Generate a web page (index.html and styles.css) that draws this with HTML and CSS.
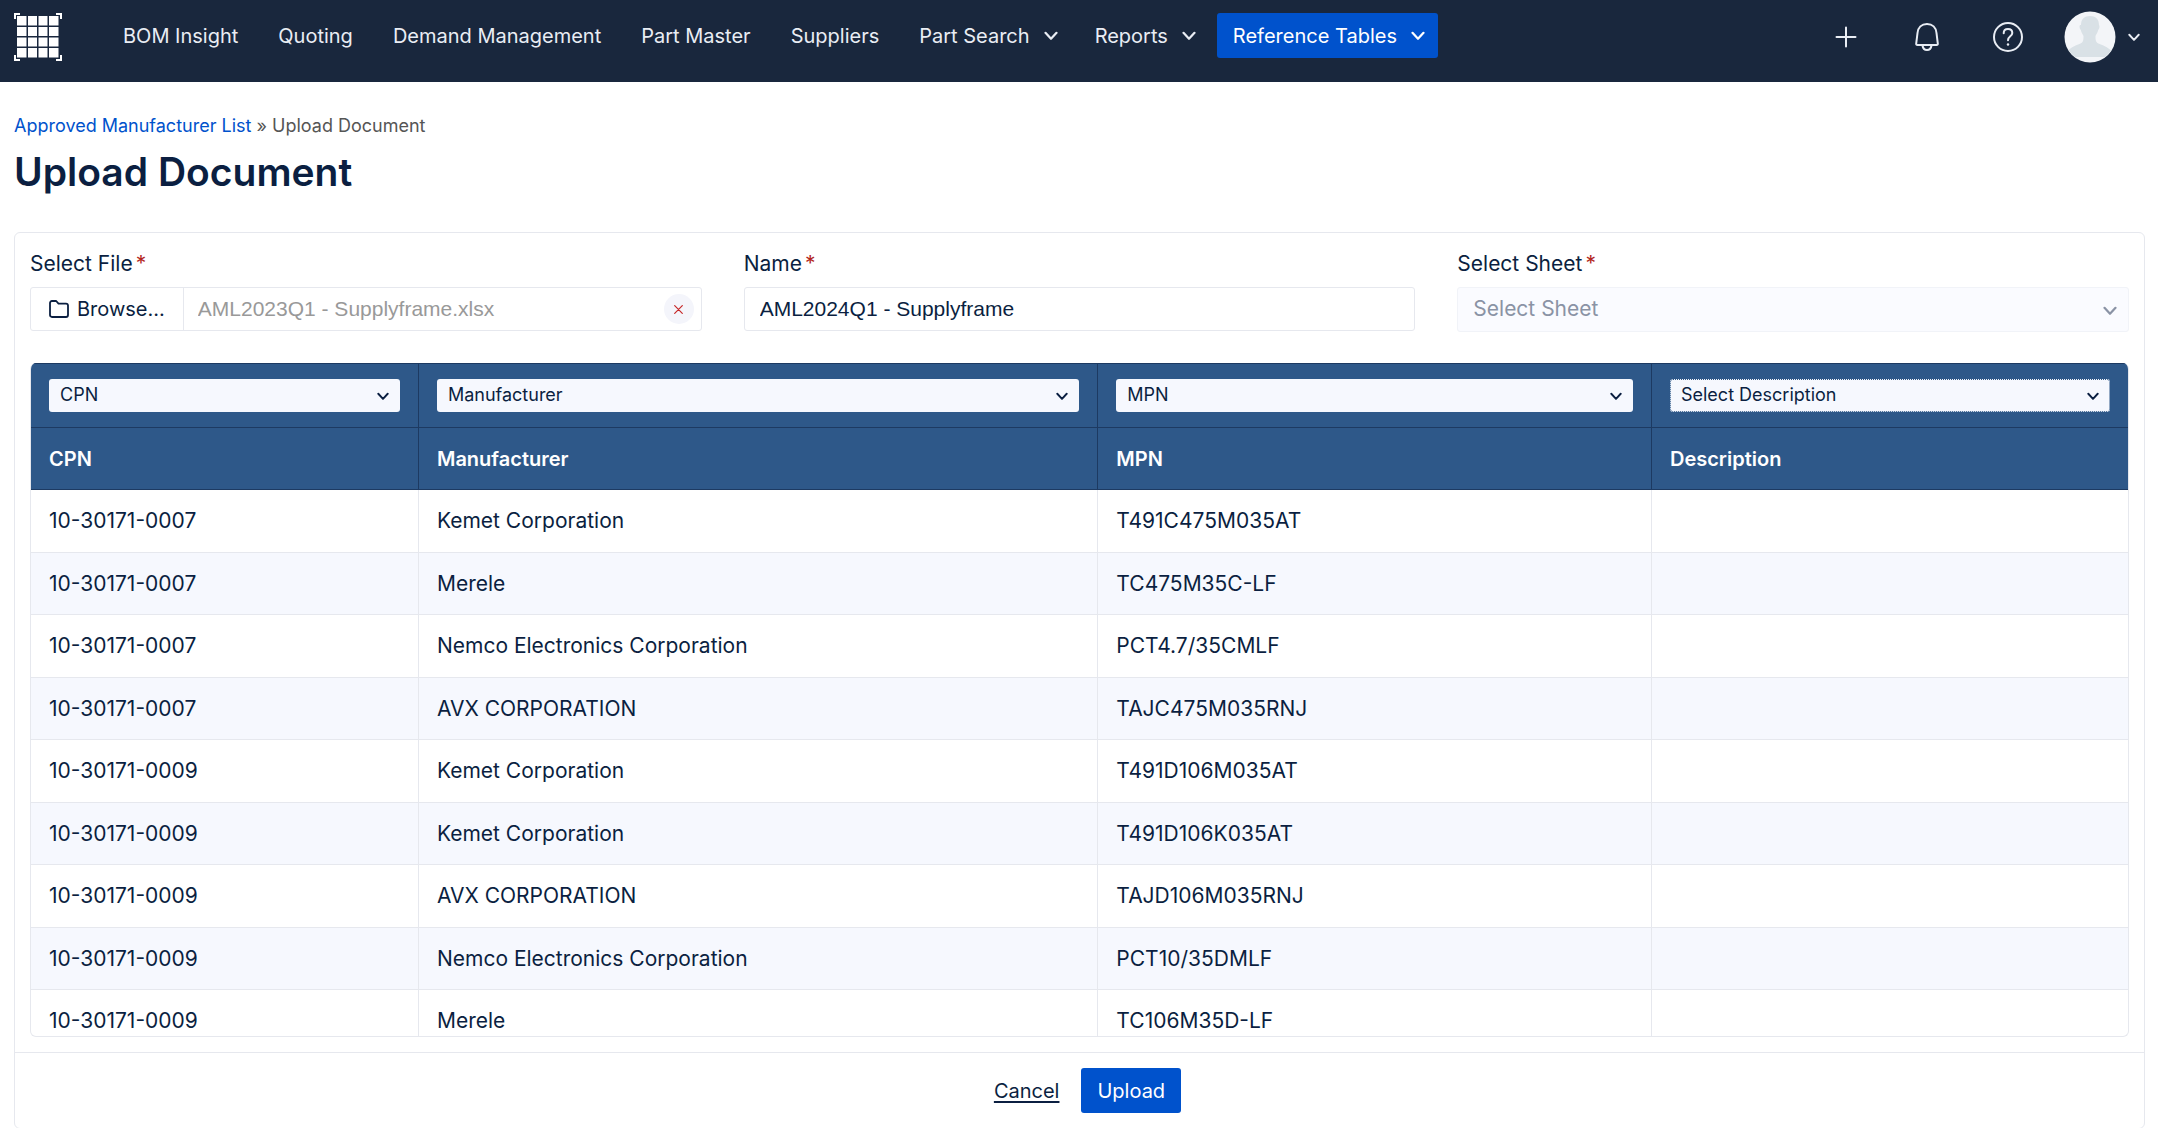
FILE: index.html
```html
<!DOCTYPE html>
<html lang="en">
<head>
<meta charset="utf-8">
<meta name="viewport" content="width=device-width, initial-scale=1">
<title>Upload Document</title>
<link rel="stylesheet" href="styles.css">
</head>
<body>
<svg class="sprite" aria-hidden="true">
  <symbol id="chevron" viewBox="0 0 14 10"><path d="M1.5 1.8 7 7.8l5.500-6" fill="none" stroke="currentColor" stroke-width="2.200" stroke-linecap="round" stroke-linejoin="round"/></symbol>
</svg>

<header class="topbar">
  <a class="logo" href="#" aria-label="Home">
    <svg viewBox="0 0 48 48" width="48" height="48" fill="currentColor">
      <path d="M0 0h6v2H2v4H0zM48 0h-6v2h4v4h2zM0 48h6v-2H2v-4H0zM48 48h-6v-2h4v-4h2z"/>
      <path d="M3 3h9.500v9.500H3zM14 3h9v9.500h-9zM24.500 3h9v9.500h-9zM35 3h9.500v9.500H35zM3 14h9.500v9H3zM14 14h9v9h-9zM24.500 14h9v9h-9zM35 14h9.500v9H35zM3 24.500h9.500v9H3zM14 24.500h9v9h-9zM24.500 24.500h9v9h-9zM35 24.500h9.500v9H35zM3 35h9.500v9.500H3zM14 35h9v9.500h-9zM24.500 35h9v9.500h-9zM35 35h9.500v9.500H35z"/>
    </svg>
  </a>
  <nav class="nav" aria-label="Main">
    <a class="nav-item" href="#">BOM Insight</a>
    <a class="nav-item" href="#">Quoting</a>
    <a class="nav-item" href="#">Demand Management</a>
    <a class="nav-item" href="#">Part Master</a>
    <a class="nav-item" href="#">Suppliers</a>
    <button class="nav-item nav-menu" type="button">Part Search <svg class="chevron"><use href="#chevron"/></svg></button>
    <button class="nav-item nav-menu" type="button">Reports <svg class="chevron"><use href="#chevron"/></svg></button>
    <button class="nav-item nav-menu active" type="button">Reference Tables <svg class="chevron"><use href="#chevron"/></svg></button>
  </nav>
  <div class="tools">
    <button class="tool" type="button" aria-label="Add">
      <svg viewBox="0 0 32 32" width="32" height="32"><path d="M16 6.500v19M6.500 16h19" fill="none" stroke="currentColor" stroke-width="2" stroke-linecap="round"/></svg>
    </button>
    <button class="tool" type="button" aria-label="Notifications">
      <svg viewBox="0 0 32 32" width="32" height="32" fill="none" stroke="currentColor" stroke-width="2" stroke-linecap="round" stroke-linejoin="round"><path d="M16 3c-5.500 0-9 3.800-9.500 9l-1.300 10.600c-.1 1 .3 1.500 1.200 1.500h19.200c.9 0 1.300-.5 1.200-1.500L25.500 12c-.5-5.200-4-9-9.500-9z"/><path d="M11.500 24.500c.4 2.800 2.100 4.500 4.500 4.500s4.100-1.700 4.500-4.500"/></svg>
    </button>
    <button class="tool" type="button" aria-label="Help">
      <svg viewBox="0 0 32 32" width="32" height="32" fill="none" stroke="currentColor" stroke-width="2" stroke-linecap="round"><circle cx="16" cy="16" r="14"/><path d="M11.700 12.200c0-2.600 1.800-4.200 4.300-4.200s4.300 1.600 4.300 3.900c0 3.400-4.300 3.400-4.300 7.300"/><circle cx="16" cy="23.500" r="1.200" fill="currentColor" stroke="none"/></svg>
    </button>
    <button class="account" type="button" aria-label="Account">
      <svg viewBox="0 0 52 52" width="52" height="52"><clipPath id="face"><circle cx="26" cy="26" r="25"/></clipPath><circle cx="26" cy="26" r="25.500" fill="#f3f5f8"/><path clip-path="url(#face)" fill="#d9e1e6" d="M17 14c0-6 3.500-9 9-9s9 3 9 9c.8 1 .7 3.500-.8 5-.7 3-2 4.500-2.700 6 0 5 .5 6.500 3.500 7.700 5 2 11 4 14 9.800V46H2v-3.500c3-5.800 9-7.800 14-9.800 3-1.200 3.500-2.700 3.500-7.700-.7-1.500-2-3-2.700-6-1.500-1.500-1.600-4-.8-5z"/></svg>
      <svg class="chevron small"><use href="#chevron"/></svg>
    </button>
  </div>
</header>

<main class="page">
  <nav class="breadcrumb" aria-label="Breadcrumb"><a href="#">Approved Manufacturer List</a> » Upload Document</nav>
  <h1>Upload Document</h1>

  <form class="card">
    <div class="card-body">
      <div class="fields">
        <div class="field">
          <label for="file-name">Select File<span class="required">*</span></label>
          <div class="file-picker">
            <button class="browse" type="button">
              <svg viewBox="0 0 20 18" width="20" height="18"><path d="M1 3c0-1.200.8-2 2-2h4.200l2.300 2.600H17c1.200 0 2 .8 2 2V15c0 1.200-.8 2-2 2H3c-1.200 0-2-.8-2-2z" fill="none" stroke="currentColor" stroke-width="1.800" stroke-linejoin="round"/></svg>
              Browse...
            </button>
            <input id="file-name" class="file-name" type="text" value="AML2023Q1 - Supplyframe.xlsx" readonly>
            <button class="clear" type="button" aria-label="Remove file">
              <svg viewBox="0 0 9 9" width="9" height="9"><path d="M.7.7l7.600 7.600M8.300.7.700 8.300" stroke="currentColor" stroke-width="1.200" stroke-linecap="round"/></svg>
            </button>
          </div>
        </div>
        <div class="field">
          <label for="doc-name">Name<span class="required">*</span></label>
          <input id="doc-name" class="text-input" type="text" value="AML2024Q1 - Supplyframe">
        </div>
        <div class="field">
          <label for="sheet">Select Sheet<span class="required">*</span></label>
          <div class="select sheet">
            <select id="sheet" disabled><option>Select Sheet</option></select>
            <svg class="chevron"><use href="#chevron"/></svg>
          </div>
        </div>
      </div>

      <div class="table-wrap">
        <table>
          <colgroup><col class="col-cpn"><col class="col-mfr"><col class="col-mpn"><col class="col-desc"></colgroup>
          <thead>
            <tr class="mapping">
              <td><div class="select"><select aria-label="Column 1"><option>CPN</option></select><svg class="chevron small"><use href="#chevron"/></svg></div></td>
              <td><div class="select"><select aria-label="Column 2"><option>Manufacturer</option></select><svg class="chevron small"><use href="#chevron"/></svg></div></td>
              <td><div class="select"><select aria-label="Column 3"><option>MPN</option></select><svg class="chevron small"><use href="#chevron"/></svg></div></td>
              <td><div class="select unset"><select aria-label="Column 4"><option>Select Description</option></select><svg class="chevron small"><use href="#chevron"/></svg></div></td>
            </tr>
            <tr><th scope="col">CPN</th><th scope="col">Manufacturer</th><th scope="col">MPN</th><th scope="col">Description</th></tr>
          </thead>
          <tbody>
            <tr><td>10-30171-0007</td><td>Kemet Corporation</td><td>T491C475M035AT</td><td></td></tr>
            <tr><td>10-30171-0007</td><td>Merele</td><td>TC475M35C-LF</td><td></td></tr>
            <tr><td>10-30171-0007</td><td>Nemco Electronics Corporation</td><td>PCT4.7/35CMLF</td><td></td></tr>
            <tr><td>10-30171-0007</td><td>AVX CORPORATION</td><td>TAJC475M035RNJ</td><td></td></tr>
            <tr><td>10-30171-0009</td><td>Kemet Corporation</td><td>T491D106M035AT</td><td></td></tr>
            <tr><td>10-30171-0009</td><td>Kemet Corporation</td><td>T491D106K035AT</td><td></td></tr>
            <tr><td>10-30171-0009</td><td>AVX CORPORATION</td><td>TAJD106M035RNJ</td><td></td></tr>
            <tr><td>10-30171-0009</td><td>Nemco Electronics Corporation</td><td>PCT10/35DMLF</td><td></td></tr>
            <tr><td>10-30171-0009</td><td>Merele</td><td>TC106M35D-LF</td><td></td></tr>
          </tbody>
        </table>
      </div>
    </div>
    <div class="card-footer">
      <a class="cancel" href="#">Cancel</a>
      <button class="upload" type="submit">Upload</button>
    </div>
  </form>
</main>
</body>
</html>
```
FILE: styles.css
```css
:root {
  --navy: #19273d;
  --ink: #0b1f41;
  --blue: #0052cc;
  --line: #e6e8ee;
  --tint: #f6f8fe;
  --head: #2e5889;
  --head-line: #1d3a62;
}

* { box-sizing: border-box; }

body {
  margin: 0;
  height: 100vh;
  display: flex;
  flex-direction: column;
  overflow: hidden;
  background: #fff;
  color: var(--ink);
  font: 21px/28px Inter, "Liberation Sans", sans-serif;
}

button, input, select { font: inherit; color: inherit; margin: 0; }
button { border: 0; background: none; padding: 0; cursor: pointer; }
a { color: inherit; text-decoration: none; }

.sprite { display: none; }
.chevron { width: 14px; height: 10px; flex: none; }
.chevron.small { width: 12px; height: 9px; }

/* Top bar */
.topbar {
  flex: none;
  height: 82px;
  padding: 13px 18px 0 14px;
  display: flex;
  align-items: flex-start;
  background: var(--navy);
  color: #e9edf4;
}
.logo { display: block; height: 48px; margin-right: 45px; color: #fff; }
.nav { display: flex; gap: 8px; }
.nav-item { height: 45px; padding: 0 16px; font-size: 20px; line-height: 46px; white-space: nowrap; }
.nav-menu { display: flex; align-items: center; gap: 14px; padding-right: 13px; }
.nav-menu.active { background: var(--blue); border-radius: 3px; color: #fff; }
.tools { display: flex; align-items: center; margin-left: auto; gap: 49px; height: 48px; }
.tool { width: 32px; height: 32px; }
.tool svg, .account svg { display: block; }
.account { display: flex; align-items: center; gap: 12px; margin-left: -9px; }

/* Page */
.page {
  flex: 1;
  min-height: 0;
  display: flex;
  flex-direction: column;
  padding: 32px 13px 0 14px;
}
.breadcrumb { font-size: 18px; line-height: 24px; color: #555; }
.breadcrumb a { color: var(--blue); }
h1 { margin: 10px 0 36px; font-size: 39px; line-height: 48px; font-weight: 600; }

.card {
  flex: 1;
  min-height: 0;
  display: flex;
  flex-direction: column;
  margin-bottom: -1px;
  border: 1px solid var(--line);
  border-radius: 6px;
}
.card-body {
  flex: 1;
  min-height: 0;
  display: flex;
  flex-direction: column;
  padding: 17px 15px 15px;
}

/* Fields */
.fields { display: grid; grid-template-columns: repeat(3, 1fr); gap: 42px; margin-bottom: 31px; }
.field label { display: block; margin-bottom: 9px; }
.required { margin-left: 3px; color: #b3261e; }
.file-picker, .text-input, .sheet {
  width: 100%;
  height: 44px;
  border: 1px solid var(--line);
  border-radius: 3px;
}
.text-input, .file-name { font-family: "Liberation Sans", Arial, sans-serif; }
.text-input { display: block; padding: 0 15px; background: none; }
.file-picker { display: flex; align-items: center; padding-right: 7px; }
.browse {
  display: flex;
  align-items: center;
  gap: 8px;
  height: 100%;
  padding: 0 18px;
  border-right: 1px solid var(--line);
  font-size: 20px;
}
.file-name { flex: 1; min-width: 0; border: 0; padding: 0 14px; background: none; color: #999; outline: 0; }
.clear {
  display: grid;
  place-items: center;
  width: 30px;
  height: 30px;
  border-radius: 50%;
  background: #f4f5fb;
  color: #c62828;
}

.select { position: relative; }
.select select { display: block; width: 100%; height: 100%; border: 0; background: none; appearance: none; outline: 0; }
.select .chevron { position: absolute; right: 11px; top: 50%; margin-top: -4px; pointer-events: none; }
.select.sheet { height: 45px; background: #fafbff; color: #8a93a5; border-color: #f1f3f8; }
.sheet select { padding: 0 15px 2px; opacity: 1; }

/* Table */
.table-wrap {
  flex: 1;
  min-height: 0;
  overflow: auto;
  scrollbar-width: none;
  border: 1px solid var(--line);
  border-top: 0;
  border-radius: 6px;
}
table { width: 100%; table-layout: fixed; border-collapse: separate; border-spacing: 0; }
.col-cpn { width: 18.5%; }
.col-mfr { width: 32.4%; }
.col-mpn { width: 26.4%; }
.col-desc { width: 22.7%; }
th, td { padding: 0 18px; text-align: left; border-bottom: 1px solid var(--line); border-right: 1px solid var(--line); }
th:last-child, td:last-child { border-right: 0; }
thead th, thead td { height: 62px; background: var(--head); color: #fff; font-size: 20px; font-weight: 600; }
thead tr th, thead tr td { border-color: var(--head-line); }
.mapping td { height: 65px; border-top: 1px solid var(--head-line); }
.mapping .select { height: 33px; background: var(--tint); color: var(--ink); border-radius: 3px; }
.mapping select { padding: 0 11px 2px; font-size: 18px; font-weight: 400; }
.unset { outline: 1px dotted var(--head); outline-offset: -1px; }
tbody td { height: 63px; }
tbody tr:nth-child(even) td { height: 62px; background: var(--tint); }

/* Footer */
.card-footer {
  flex: none;
  display: flex;
  justify-content: center;
  align-items: center;
  gap: 6px;
  padding: 15px 16px;
  border-top: 1px solid var(--line);
  font-size: 20px;
}
.cancel { padding: 0 16px; text-decoration: underline; text-underline-offset: 3px; text-decoration-thickness: 2px; }
.upload { height: 45px; padding: 0 16px; border-radius: 3px; background: var(--blue); color: #fff; }
```
